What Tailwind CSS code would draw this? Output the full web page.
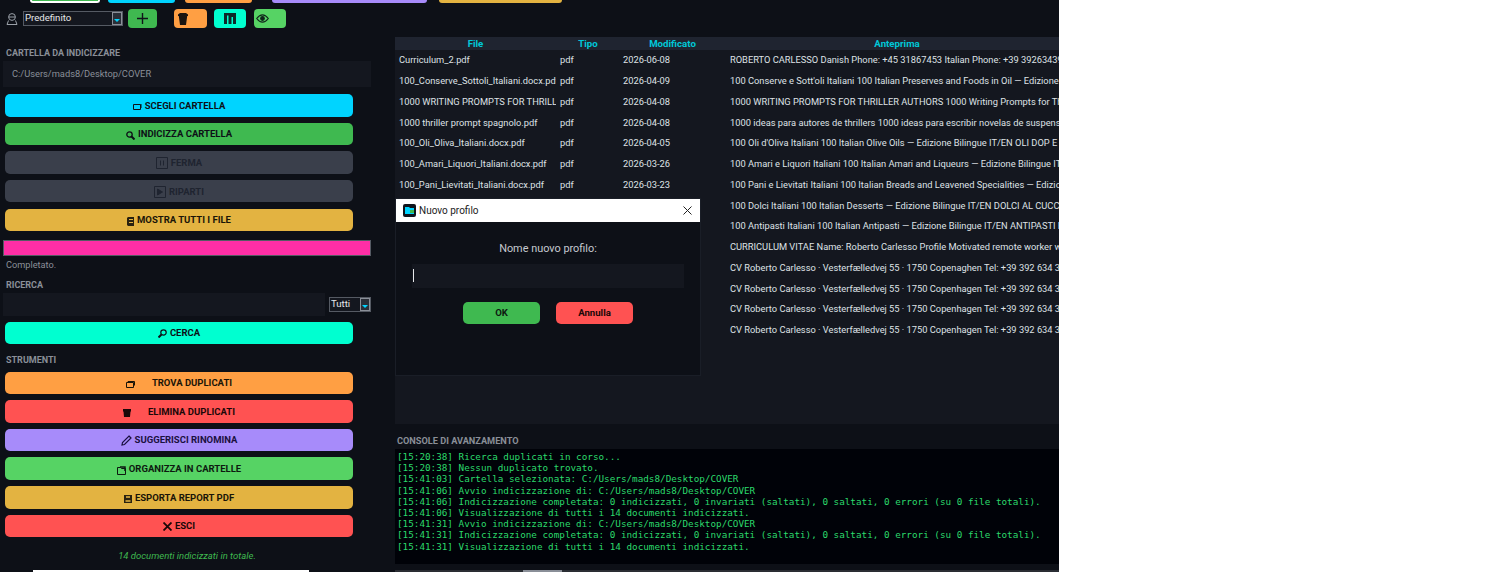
<!DOCTYPE html>
<html lang="it">
<head>
    <meta charset="UTF-8">
    <title>Indicizzatore documenti</title>
    <script src="https://cdn.jsdelivr.net/npm/@tailwindcss/browser@4"></script>
</head>
<body class="bg-white font-['Roboto','Noto_Sans',sans-serif]">
    <div class="relative flex h-[572px] w-[1059px] overflow-hidden bg-[#0d1017]">

        <!-- colonna sinistra -->
        <aside class="flex w-[395px] shrink-0 flex-col">
            <div class="flex h-[3px] items-end">
                <div class="ml-[30px] h-[3px] w-[70px] rounded-b-[3px] border-x-2 border-b-2 border-white bg-[#3fb950]"></div>
                <div class="ml-[8px] h-[3px] w-[67px] rounded-b-[3px] bg-[#00d4ff]"></div>
                <div class="ml-[10px] h-[3px] w-[67px] rounded-b-[3px] bg-[#ff9f43]"></div>
                <div class="ml-[20px] h-[3px] w-[123px] rounded-bl-[3px] bg-[#a78bfa]"></div>
            </div>

            <div class="mt-[6px] flex h-[19px] items-center">
                <svg class="ml-[6px] h-[14px] w-[12px] text-[#9aa0a8]" viewBox="0 0 12 14" fill="none" stroke="currentColor" stroke-width="1"><circle cx="6" cy="5" r="3.4"/><path d="M3 5h6M2.5 8.500 1 12.500h10l-1.500-4"/></svg>
                <div class="ml-[5px] flex h-[15px] w-[100px] items-center justify-between border border-[#555a63] bg-[#14171f] pl-[1px] text-[9.600px] text-[#e6e8ea]">
                    <span>Predefinito</span>
                    <span class="flex h-full w-[10px] items-center justify-center border border-[#8a8f98] bg-[#2a2e37]"><svg class="mt-[4px] h-[3px] w-[6px]" viewBox="0 0 6 3" fill="#00d4ff"><path d="M0 0h6L3 3z"/></svg></span>
                </div>
                <div class="ml-[5px] flex h-[19px] w-[29px] items-center justify-center rounded-[4px] bg-[#3fb950]">
                    <svg class="h-[11px] w-[11px]" viewBox="0 0 11 11" stroke="#10141a" stroke-width="1.400"><path d="M5.500 0v11M0 5.500h11"/></svg>
                </div>
                <div class="ml-[17px] flex h-[19px] w-[33px] items-center rounded-[4px] bg-[#ff9f43] pl-[4px]">
                    <svg class="h-[12px] w-[10px]" viewBox="0 0 10 12" fill="#1a1410"><path d="M0 1.500 2 0h6l2 1.500V3H9.200L8 12H2L.8 3H0z"/></svg>
                </div>
                <div class="ml-[7px] flex h-[19px] w-[32px] items-center justify-center rounded-[4px] bg-[#00ffd0]">
                    <svg class="h-[11px] w-[12px]" viewBox="0 0 12 11"><rect width="12" height="11" fill="#0c2a2a"/><path d="M3 2.500h1.500V11H3zM7.500 4H9v7H7.500z" fill="#00ffd0"/></svg>
                </div>
                <div class="ml-[8px] flex h-[19px] w-[32px] items-center rounded-[4px] bg-[#56d364] pl-[2px]">
                    <svg class="h-[9px] w-[13px]" viewBox="0 0 13 9" fill="none" stroke="#10231a" stroke-width="1.200"><path d="M.7 4.500C3 1.500 4.700.8 6.500.8s3.500.7 5.800 3.700C10 7.500 8.300 8.200 6.500 8.200S3 7.500.7 4.500z"/><circle cx="6.500" cy="4.500" r="1.800" fill="#10231a"/></svg>
                </div>
            </div>

            <h2 class="ml-[6px] mt-[18px] text-[9px] leading-[14px] font-bold text-[#8a8f98]">CARTELLA DA INDICIZZARE</h2>
            <div class="ml-[3px] mt-[1px] flex h-[26px] w-[368px] items-center bg-[#14171f] pl-[9px] text-[9.300px] text-[#8a8f98]">C:/Users/mads8/Desktop/COVER</div>

            <div class="ml-[5px] mt-[7px] flex w-[348px] flex-col gap-[6.150px] text-[9.500px] font-bold">
                <button class="flex h-[22.500px] items-center justify-center gap-[3px] rounded-[5px] bg-[#00d4ff] pt-px text-[#0d1017]">
                    <svg class="mt-[2px] h-[7px] w-[9px]" viewBox="0 0 9 7" fill="none" stroke="#0d1017"><path d="M.5 1.500h7v5h-7zM8 1v4"/></svg>SCEGLI CARTELLA
                </button>
                <button class="flex h-[22.500px] items-center justify-center gap-[3px] rounded-[5px] bg-[#3fb950] pt-px text-[#0d1017]">
                    <svg class="mt-[2px] h-[9px] w-[9px]" viewBox="0 0 9 9" fill="none" stroke="#0d1017" stroke-width="1.300"><circle cx="3.500" cy="3.500" r="2.700"/><path d="m5.500 5.500 3 3" stroke-width="2"/></svg>INDICIZZA CARTELLA
                </button>
                <button class="flex h-[22.500px] items-center justify-center gap-[3px] rounded-[5px] bg-[#3a3f4b] pt-px text-[#1f2430]">
                    <svg class="h-[12px] w-[12px]" viewBox="0 0 12 12" fill="none" stroke="#1f2430"><path d="M.5.500h11v11H.500zM4.500 3.500v5M7.500 3.500v5"/></svg>FERMA
                </button>
                <button class="flex h-[22.500px] items-center justify-center gap-[3px] rounded-[5px] bg-[#3a3f4b] pt-px text-[#1f2430]">
                    <svg class="h-[12px] w-[12px]" viewBox="0 0 12 12" fill="none" stroke="#1f2430"><path d="M.5.500h11v11H.500z"/><path d="M3.500 3v6l5-3z" fill="#1f2430"/></svg>RIPARTI
                </button>
                <button class="flex h-[22.500px] items-center justify-center gap-[3px] rounded-[5px] bg-[#e3b341] pt-px text-[#1a1508]">
                    <svg class="mt-[2px] h-[9px] w-[7px]" viewBox="0 0 7 9" fill="#2a2210"><path d="M0 1 1 0h6v9H1L0 8z"/><path d="M2 2h4v1H2zM2 5h4v1H2z" fill="#e3b341"/></svg>MOSTRA TUTTI I FILE
                </button>
            </div>

            <div class="ml-[3px] mt-[8.500px] h-[16px] w-[368px] border border-[#555a63] bg-[#ff2ea6]"></div>
            <p class="ml-[6px] mt-[2px] text-[9.200px] leading-[14px] text-[#8a8f98]">Completato.</p>
            <h2 class="ml-[6px] mt-[6px] text-[9px] leading-[14px] font-bold text-[#8a8f98]">RICERCA</h2>

            <div class="ml-[3px] mt-[1px] flex h-[23px] w-[368px] items-center justify-between">
                <div class="h-[23px] w-[322px] bg-[#14171f]"></div>
                <div class="flex h-[15px] w-[42px] items-center justify-between border border-[#555a63] bg-[#14171f] pl-[1px] text-[9.600px] text-[#e6e8ea]">
                    <span>Tutti</span>
                    <span class="flex h-full w-[10px] items-center justify-center border border-[#8a8f98] bg-[#2a2e37]"><svg class="mt-[4px] h-[3px] w-[6px]" viewBox="0 0 6 3" fill="#00d4ff"><path d="M0 0h6L3 3z"/></svg></span>
                </div>
            </div>

            <button class="ml-[5px] mt-[6px] flex h-[22.500px] w-[348px] items-center justify-center gap-[3px] rounded-[5px] bg-[#00ffd0] pt-px text-[9.500px] font-bold text-[#0d1017]">
                <svg class="mt-[1px] h-[9px] w-[9px]" viewBox="0 0 9 9" fill="none" stroke="#0d1017" stroke-width="1.200"><circle cx="5.500" cy="3.500" r="2.700"/><path d="m3.500 5.500-3 3" stroke-width="2"/></svg>CERCA
            </button>

            <h2 class="ml-[6px] mt-[8.500px] text-[9px] leading-[14px] font-bold text-[#8a8f98]">STRUMENTI</h2>

            <div class="ml-[5px] mt-[5px] flex w-[348px] flex-col gap-[6.150px] text-[9.500px] font-bold">
                <button class="flex h-[22.500px] items-center justify-center gap-[17px] rounded-[5px] bg-[#ff9f43] pt-px text-[#1a1508]">
                    <svg class="mt-[2px] h-[7px] w-[9px]" viewBox="0 0 9 7" fill="none" stroke="#1a1508"><path d="M.5 1.500h7v5h-7zM2 1.500V.5h6.500v4"/></svg>TROVA DUPLICATI
                </button>
                <button class="flex h-[22.500px] items-center justify-center gap-[17px] rounded-[5px] bg-[#ff5252] pt-px text-[#1a0808]">
                    <svg class="mt-[2px] h-[8px] w-[8px]" viewBox="0 0 8 8" fill="#1a0808"><path d="M0 0h8v2.500H7.500L7 8H1L.5 2.500H0z"/></svg>ELIMINA DUPLICATI
                </button>
                <button class="flex h-[22.500px] items-center justify-center gap-[3px] rounded-[5px] bg-[#a78bfa] pt-px text-[#1a1040]">
                    <svg class="h-[11px] w-[11px]" viewBox="0 0 11 11" fill="none" stroke="#1a1040" stroke-width="1.200"><path d="M8 1 10 3 3.500 9.500 1 10l.5-2.500z"/></svg>SUGGERISCI RINOMINA
                </button>
                <button class="flex h-[22.500px] items-center justify-center gap-[3px] rounded-[5px] bg-[#56d364] pt-px text-[#0d1a10]">
                    <svg class="mt-[2px] h-[9px] w-[9px]" viewBox="0 0 9 9" fill="none" stroke="#0d1a10"><path d="M.5 1.500h3l1 1h4v6h-8z"/><path d="M3 1h5v4" stroke-width="1.500"/></svg>ORGANIZZA IN CARTELLE
                </button>
                <button class="flex h-[22.500px] items-center justify-center gap-[3px] rounded-[5px] bg-[#e3b341] pt-px text-[#1a1508]">
                    <svg class="mt-[2px] h-[8px] w-[8px]" viewBox="0 0 8 8" fill="#2a2210"><path d="M0 0h8v8H0z"/><path d="M2 1h4v2H2zM1.500 5h5v2h-5z" fill="#b89235"/></svg>ESPORTA REPORT PDF
                </button>
                <button class="flex h-[22.500px] items-center justify-center gap-[3px] rounded-[5px] bg-[#ff5252] pt-px text-[#1a0808]">
                    <svg class="h-[9px] w-[9px]" viewBox="0 0 9 9" stroke="#1a0808" stroke-width="1.800"><path d="m.5.5 8 8M8.500.5l-8 8"/></svg>ESCI
                </button>
            </div>

            <p class="mt-[12px] w-[374px] text-center text-[9.500px] leading-[14px] text-[#3fb950] italic">14 documenti indicizzati in totale.</p>
            <div class="ml-[33px] mt-auto h-[2px] w-[276px] bg-white"></div>
        </aside>

        <!-- colonna destra -->
        <main class="flex min-w-0 flex-1 flex-col">
            <div class="flex h-[3px] shrink-0 items-end">
                <div class="h-[3px] w-[32px] rounded-br-[3px] bg-[#a78bfa]"></div>
                <div class="ml-[12px] h-[3px] w-[123px] rounded-b-[3px] bg-[#e3b341]"></div>
            </div>

            <section class="mt-[34px] h-[387px] w-[664px] shrink-0 overflow-hidden bg-[#14171f]">
                <div class="grid h-[13px] w-[674px] grid-cols-[161px_64px_105px_344px] bg-[#1f2430] text-center text-[9.700px] leading-[13px] font-bold text-[#00c8d8]">
                    <div>File</div>
                    <div>Tipo</div>
                    <div>Modificato</div>
                    <div>Anteprima</div>
                </div>
                <div id="rows"></div>
            </section>

            <h2 class="ml-[2px] mt-[10px] text-[9.200px] leading-[14px] font-bold text-[#8a8f98]">CONSOLE DI AVANZAMENTO</h2>
            <pre id="console" class="mt-[1px] h-[115px] w-[664px] shrink-0 overflow-hidden bg-[#000208] pl-[2px] pt-[2px] font-['DejaVu_Sans_Mono',monospace] text-[9.300px] leading-[11.200px] text-[#2bd96b]"></pre>
            <div class="mt-auto h-[2px] w-full bg-[#2a2d33]">
                <div class="ml-[128px] h-[2px] w-[39px] bg-[#8a8f98]"></div>
            </div>
        </main>

        <!-- finestra di dialogo -->
        <div class="absolute left-[396px] top-[199px] h-[176px] w-[304px] bg-[#0d1017] shadow-[0_0_0_1px_#1a1e27]">
            <div class="flex h-[23px] items-center bg-white pl-[7px] pr-[7px] text-[10px] text-[#222]">
                <svg class="h-[13px] w-[13px]" viewBox="0 0 13 13"><rect width="13" height="13" rx="2" fill="#10141c"/><path d="M2 3h4l1 1h4v6H2z" fill="#00d4ff"/><rect x="7" y="6" width="4" height="3" fill="#3fb950"/></svg>
                <span class="ml-[3px]">Nuovo profilo</span>
                <svg class="ml-auto mr-[1px] h-[9px] w-[9px]" viewBox="0 0 9 9" stroke="#222" stroke-width="1"><path d="m.5.5 8 8M8.500.5l-8 8"/></svg>
            </div>
            <p class="mt-[19px] text-center text-[10.900px] leading-[15px] text-[#c5c9cf]">Nome nuovo profilo:</p>
            <div class="mx-[16px] mt-[7.500px] flex h-[24px] items-center bg-[#14171f] pl-[1px]">
                <div class="h-[13px] w-px bg-[#e6e8ea]"></div>
            </div>
            <div class="mt-[14px] flex justify-center gap-[16px] text-[9.600px] font-bold">
                <button class="h-[22.500px] w-[77px] rounded-[5px] bg-[#3fb950] text-[#0d1a10]">OK</button>
                <button class="h-[22.500px] w-[77px] rounded-[5px] bg-[#ff5252] text-[#1a0808]">Annulla</button>
            </div>
        </div>
    </div>

    <script>
        const docs = [
            ['Curriculum_2.pdf', '2026-06-08', 'ROBERTO CARLESSO Danish Phone: +45 31867453 Italian Phone: +39 392634390 Email'],
            ['100_Conserve_Sottoli_Italiani.docx.pdf', '2026-04-09', "100 Conserve e Sott'oli Italiani 100 Italian Preserves and Foods in Oil — Edizione Bilingue"],
            ['1000 WRITING PROMPTS FOR THRILLER AUTHORS.pdf', '2026-04-08', '1000 WRITING PROMPTS FOR THRILLER AUTHORS 1000 Writing Prompts for Thriller Authors'],
            ['1000 thriller prompt spagnolo.pdf', '2026-04-08', '1000 ideas para autores de thrillers 1000 ideas para escribir novelas de suspense y misterio'],
            ['100_Oli_Oliva_Italiani.docx.pdf', '2026-04-05', "100 Oli d'Oliva Italiani 100 Italian Olive Oils — Edizione Bilingue IT/EN OLI DOP E IGP"],
            ['100_Amari_Liquori_Italiani.docx.pdf', '2026-03-26', '100 Amari e Liquori Italiani 100 Italian Amari and Liqueurs — Edizione Bilingue IT/EN AMARI'],
            ['100_Pani_Lievitati_Italiani.docx.pdf', '2026-03-23', '100 Pani e Lievitati Italiani 100 Italian Breads and Leavened Specialities — Edizione Bilingue'],
            ['100_Dolci_Italiani.docx.pdf', '2026-03-20', '100 Dolci Italiani 100 Italian Desserts — Edizione Bilingue IT/EN DOLCI AL CUCCHIAIO E TORTE'],
            ['100_Antipasti_Italiani.docx.pdf', '2026-03-18', '100 Antipasti Italiani 100 Italian Antipasti — Edizione Bilingue IT/EN ANTIPASTI FREDDI'],
            ['Curriculum.pdf', '2026-03-10', 'CURRICULUM VITAE Name: Roberto Carlesso Profile Motivated remote worker with experience'],
            ['CV_1.pdf', '2026-03-02', 'CV Roberto Carlesso · Vesterfælledvej 55 · 1750 Copenaghen Tel: +39 392 634 3900 Email'],
            ['CV_2.pdf', '2026-03-02', 'CV Roberto Carlesso · Vesterfælledvej 55 · 1750 Copenhagen Tel: +39 392 634 3900 Email'],
            ['CV_3.pdf', '2026-03-02', 'CV Roberto Carlesso · Vesterfælledvej 55 · 1750 Copenhagen Tel: +39 392 634 3900 Email'],
            ['CV_4.pdf', '2026-03-02', 'CV Roberto Carlesso · Vesterfælledvej 55 · 1750 Copenhagen Tel: +39 392 634 3900 Email']
        ];

        document.getElementById('rows').innerHTML = docs.map(d => `
            <div class="grid h-[20.750px] w-[674px] grid-cols-[161px_64px_105px_344px] items-center text-[9.300px] whitespace-nowrap text-[#dfe2e6]">
                <div class="overflow-hidden pl-[4px] pr-[2px]">${d[0]}</div>
                <div class="pl-[4px]">pdf</div>
                <div class="pl-[3px]">${d[1]}</div>
                <div class="overflow-hidden pl-[5px]">${d[2]}</div>
            </div>`).join('');

        document.getElementById('console').textContent = [
            '[15:20:38] Ricerca duplicati in corso...',
            '[15:20:38] Nessun duplicato trovato.',
            '[15:41:03] Cartella selezionata: C:/Users/mads8/Desktop/COVER',
            '[15:41:06] Avvio indicizzazione di: C:/Users/mads8/Desktop/COVER',
            '[15:41:06] Indicizzazione completata: 0 indicizzati, 0 invariati (saltati), 0 saltati, 0 errori (su 0 file totali).',
            '[15:41:06] Visualizzazione di tutti i 14 documenti indicizzati.',
            '[15:41:31] Avvio indicizzazione di: C:/Users/mads8/Desktop/COVER',
            '[15:41:31] Indicizzazione completata: 0 indicizzati, 0 invariati (saltati), 0 saltati, 0 errori (su 0 file totali).',
            '[15:41:31] Visualizzazione di tutti i 14 documenti indicizzati.'
        ].join('\n');
    </script>
</body>
</html>
